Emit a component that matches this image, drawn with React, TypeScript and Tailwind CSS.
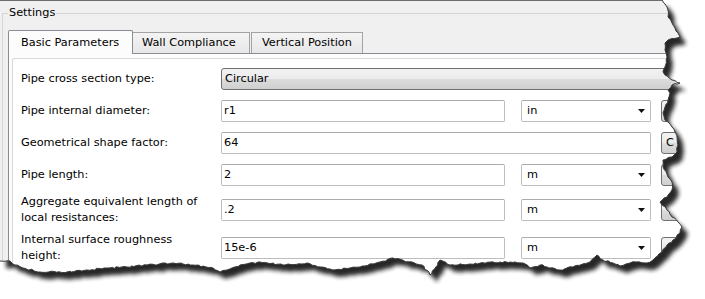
import React from "react";

type Pt = [number, number];

// outline of the torn paper, clockwise from the top-left corner
const tear: Pt[] = [
  [662, 0], [667, 7], [668, 10], [668, 17], [672, 23], [675, 28], [678, 33], [680, 37],
  [677, 38], [668, 40], [665, 43], [665, 50], [667, 57], [665, 67], [663, 72], [665, 75],
  [672, 80], [680, 83], [672, 85], [668, 90], [670, 93], [668, 100], [665, 107], [663, 113],
  [665, 120], [668, 122], [672, 127], [675, 132], [677, 137], [678, 145], [677, 152], [672, 157],
  [663, 160], [663, 167], [668, 177], [672, 182], [672, 190], [667, 197], [660, 202], [662, 205],
  [667, 210], [672, 217], [678, 222], [682, 227], [680, 233], [673, 240], [667, 245], [662, 252],
  [653, 260], [647, 263], [637, 262], [630, 263], [620, 266], [613, 263], [603, 260], [597, 255],
  [590, 262], [573, 267], [560, 270], [540, 265], [530, 268], [523, 263], [500, 262], [470, 264],
  [450, 265], [440, 260], [430, 275], [422, 265], [393, 258], [380, 262], [360, 267], [350, 268],
  [333, 270], [320, 267], [307, 263], [283, 265], [260, 262], [240, 265], [227, 270], [220, 272],
  [213, 268], [193, 265], [173, 263], [147, 265], [127, 267], [107, 268], [87, 270], [67, 272],
  [40, 272], [23, 268], [15, 265], [10, 261], [0, 261],
];

function jagged(pts: Pt[]): string {
  let seed = 11;
  const rnd = () => {
    seed = (seed * 9301 + 49297) % 233280;
    return seed / 233280 - 0.5;
  };
  const out: Pt[] = [pts[0]];
  for (let i = 0; i < pts.length - 1; i++) {
    const [x0, y0] = pts[i];
    const [x1, y1] = pts[i + 1];
    const n = Math.max(1, Math.floor(Math.hypot(x1 - x0, y1 - y0) / 2.5));
    for (let k = 1; k <= n; k++) {
      const t = k / n;
      const j = k === n ? 0 : 1.6;
      out.push([x0 + (x1 - x0) * t + rnd() * j, y0 + (y1 - y0) * t + rnd() * j]);
    }
  }
  return out.map((p, i) => `${i ? "L" : "M"}${p[0].toFixed(1)} ${p[1].toFixed(1)}`).join(" ");
}

const edge = jagged(tear);
const paper = `M0 0 L662 0 ${edge.replace(/^M/, "L")} L0 0 Z`;

const TornEdge = () => (
  <svg className="absolute inset-0 pointer-events-none" width={705} height={299}>
    <defs>
      <clipPath id="outside">
        <path d={`M-10 -10 H720 V310 H-10 Z ${paper}`} clipRule="evenodd" />
      </clipPath>
      <filter id="soft" filterUnits="userSpaceOnUse" x={-30} y={-30} width={780} height={360}>
        <feGaussianBlur stdDeviation={2} />
      </filter>
    </defs>
    <path d={`M-10 -10 H720 V310 H-10 Z ${paper}`} fill="#ffffff" fillRule="evenodd" />
    <g clipPath="url(#outside)">
      <path d={paper} fill="#1e1e1e" opacity={0.95} transform="translate(6 7)" filter="url(#soft)" />
    </g>
    <path d={edge} fill="none" stroke="#3a3a3a" strokeWidth={1} />
  </svg>
);

const box = "h-[22px] shrink-0 flex items-center bg-white border border-[#bdbdbd] border-t-[#ababab] rounded-[2px]";
const winButton =
  "h-[22px] shrink-0 flex items-center rounded-[3px] border border-[#707070] bg-[linear-gradient(#f2f2f2,#ebebeb_50%,#dddddd_50%,#cfcfcf)]";

const TextBox = ({ value, wide }: { value: string; wide?: boolean }) => (
  <div className={`${box} pl-[2px] ${wide ? "w-[430px]" : "w-[284px]"}`}>{value}</div>
);

const UnitSelect = ({ unit }: { unit: string }) => (
  <div className={`${box} ml-[16px] w-[130px] pl-[5px] pr-[5px] justify-between`}>
    <span>{unit}</span>
    <svg width="7" height="4" viewBox="0 0 7 4">
      <polygon points="0,0 7,0 3.5,4" fill="#111" />
    </svg>
  </div>
);

const SideButton = ({ label }: { label?: string }) => (
  <div className={`${winButton} ml-[10px] w-[40px] pl-[4px]`}>{label}</div>
);

const Label = ({ children }: { children: React.ReactNode }) => (
  <div className="w-[200px] shrink-0 leading-[16px]">{children}</div>
);

export default function App() {
  return (
    <div className="relative w-[705px] h-[299px] overflow-hidden bg-white font-['DejaVu_Sans',sans-serif] text-[11.3px] text-black">
      <div className="w-[720px] h-[299px] bg-[#f0f0f0] border-t border-[#6d6d6d]">
        {/* Settings group */}
        <div className="relative pt-[12px] pl-[2px]">
          <span className="absolute left-[8px] top-[5px] px-[1px] bg-[#f0f0f0] leading-[14px]">Settings</span>
          <div className="h-[290px] border-t border-l border-[#d5d5d5] pt-[16px] pl-[5px]">
            {/* Tabs */}
            <div className="flex items-end h-[23px] leading-[16px]">
              <div className="relative z-10 -mb-px h-[24px] w-[125px] shrink-0 pl-[12px] pt-[4px] bg-[#fcfcfc] border border-b-0 border-[#898c95] rounded-t-[2px]">
                Basic Parameters
              </div>
              <div className="h-[21px] w-[117px] shrink-0 pl-[9px] pt-[2px] border-t border-r border-[#a3a3a3] bg-[linear-gradient(#f4f4f4,#e7e7e7)]">
                Wall Compliance
              </div>
              <div className="ml-[1px] h-[21px] w-[112px] shrink-0 pl-[10px] pt-[2px] border-t border-l border-r border-[#a3a3a3] bg-[linear-gradient(#f4f4f4,#e7e7e7)]">
                Vertical Position
              </div>
            </div>

            {/* Tab pane */}
            <div className="h-[260px] border-t border-l border-[#898c95] bg-[#fcfcfc] pt-[4px] pl-[3px]">
              <div className="h-[250px] bg-white border-t border-l border-[#d9d9d9] rounded-tl-[3px] pt-[4px] pl-[8px]">
                <div className="flex items-center h-[32px]">
                  <Label>Pipe cross section type:</Label>
                  <div className={`${winButton} w-[480px] pl-[3px]`}>Circular</div>
                </div>
                <div className="flex items-center h-[32px]">
                  <Label>Pipe internal diameter:</Label>
                  <TextBox value="r1" />
                  <UnitSelect unit="in" />
                  <SideButton />
                </div>
                <div className="flex items-center h-[32px]">
                  <Label>Geometrical shape factor:</Label>
                  <TextBox value="64" wide />
                  <SideButton label="C" />
                </div>
                <div className="flex items-center h-[32px]">
                  <Label>Pipe length:</Label>
                  <TextBox value="2" />
                  <UnitSelect unit="m" />
                  <SideButton />
                </div>
                <div className="flex items-center h-[38px]">
                  <Label>
                    Aggregate equivalent length of
                    <br />
                    local resistances:
                  </Label>
                  <TextBox value=".2" />
                  <UnitSelect unit="m" />
                  <SideButton />
                </div>
                <div className="flex items-center h-[38px]">
                  <Label>
                    Internal surface roughness
                    <br />
                    height:
                  </Label>
                  <TextBox value="15e-6" />
                  <UnitSelect unit="m" />
                  <SideButton />
                </div>
              </div>
            </div>
          </div>
        </div>
      </div>
      <TornEdge />
    </div>
  );
}
